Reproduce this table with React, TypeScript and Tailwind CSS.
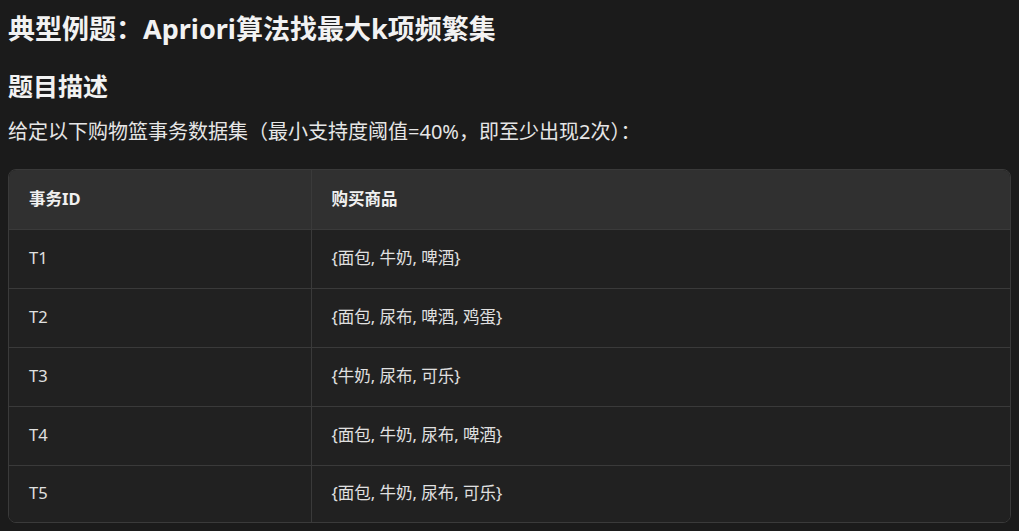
const FONT = {
  fontFamily: '"Noto Sans", "Noto Sans CJK SC", sans-serif',
};

const rows = [
  { id: "T1", items: "{面包, 牛奶, 啤酒}" },
  { id: "T2", items: "{面包, 尿布, 啤酒, 鸡蛋}" },
  { id: "T3", items: "{牛奶, 尿布, 可乐}" },
  { id: "T4", items: "{面包, 牛奶, 尿布, 啤酒}" },
  { id: "T5", items: "{面包, 牛奶, 尿布, 可乐}" },
];

export default function App() {
  return (
    <div
      className="h-[531px] w-[1019px] overflow-hidden bg-[#1b1b1b] px-2 text-[#e8e8e8]"
      style={FONT}
    >
      <h1 className="mt-[10px] text-[27px] font-bold leading-[37px] text-[#f2f2f2]">
        典型例题：Apriori算法找最大k项频繁集
      </h1>
      <h2 className="mt-[23px] text-[25px] font-bold leading-[32px] text-[#f2f2f2]">
        题目描述
      </h2>
      <p className="mt-[16px] text-[20px] leading-[28px] text-[#e6e6e6]">
        给定以下购物篮事务数据集（最小支持度阈值=40%，即至少出现2次）：
      </p>

      {/* table */}
      <div className="mt-[23px] overflow-hidden rounded-lg border border-[#3a3a3a]">
        <table className="w-full border-collapse text-[16.5px]">
          <thead>
            <tr className="h-[59px] bg-[#303030]">
              <th className="w-[302px] border-r border-[#3a3a3a] pl-5 text-left font-bold text-[#f0f0f0]">
                事务ID
              </th>
              <th className="pl-5 text-left font-bold text-[#f0f0f0]">购买商品</th>
            </tr>
          </thead>
          <tbody>
            {rows.map((row, i) => (
              <tr
                key={row.id}
                className={
                  i === rows.length - 1
                    ? "h-[57px] border-t border-[#3a3a3a] bg-[#212121]"
                    : "h-[59px] border-t border-[#3a3a3a] bg-[#212121]"
                }
              >
                <td className="border-r border-[#3a3a3a] pl-5 text-[#e0e0e0]">{row.id}</td>
                <td className="pl-5 text-[#e0e0e0]">{row.items}</td>
              </tr>
            ))}
          </tbody>
        </table>
      </div>
    </div>
  );
}
